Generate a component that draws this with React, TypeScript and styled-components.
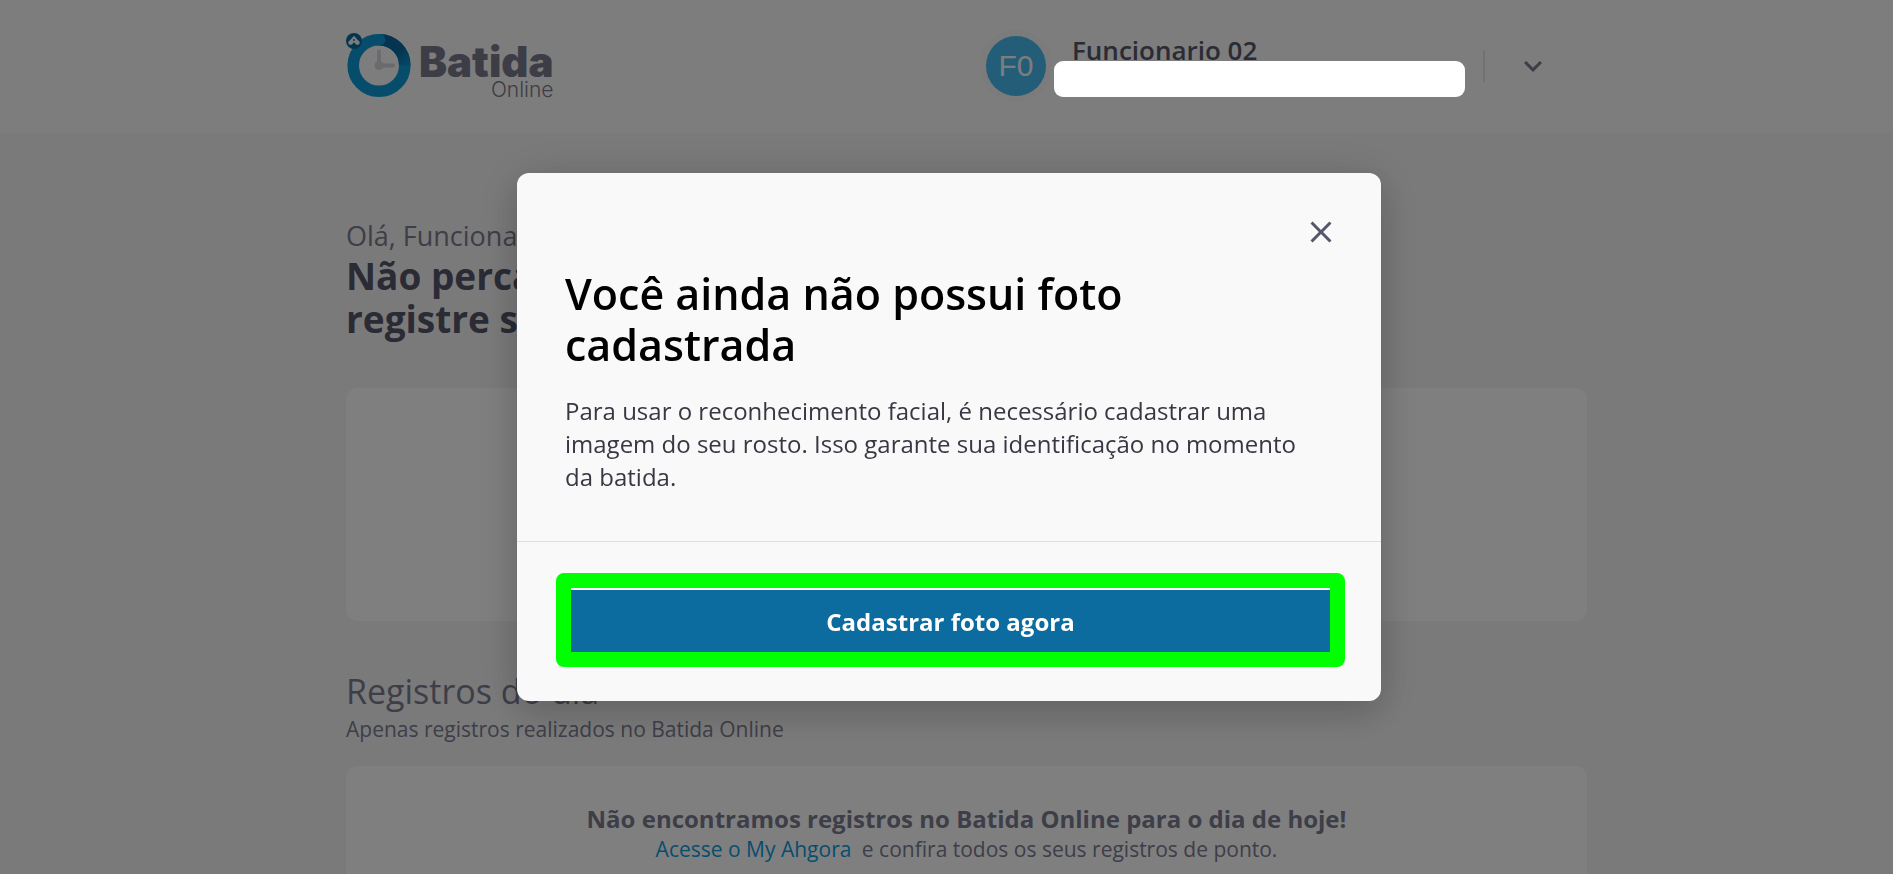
import React from 'react';
import styled, { createGlobalStyle } from 'styled-components';

const GlobalStyle = createGlobalStyle`
  *, *::before, *::after { box-sizing: border-box; }
  body { margin: 0; background: #f5f5f5; }
  h1, h2, p { margin: 0; }
  button { font: inherit; border: 0; cursor: pointer; }
`;

const Page = styled.div`
  height: 100vh;
  overflow: hidden;
  background: #f5f5f5;
  color: #7c7c92;
  font-family: 'Open Sans', 'Noto Sans', sans-serif;
`;

const TopBar = styled.header`
  display: flex;
  align-items: center;
  justify-content: space-between;
  min-height: 133px;
  padding: 0 348px 1px 346px;
  background: #fafafa;
`;

const Brand = styled.a`
  display: flex;
  align-items: flex-end;
  gap: 7px;
  color: #7a7a8e;
  text-decoration: none;
`;

const BrandName = styled.span`
  display: flex;
  flex-direction: column;
  align-items: flex-end;
  font-family: Inter, sans-serif;
`;

const BrandMain = styled.span`
  font-size: 42px;
  font-weight: 900;
  line-height: 36px;
`;

const BrandSub = styled.span`
  font-size: 21px;
  font-weight: 300;
  line-height: 20px;
`;

const Account = styled.div`
  display: flex;
  align-items: center;
`;

const Avatar = styled.div`
  display: grid;
  place-items: center;
  width: 60px;
  height: 60px;
  border-radius: 50%;
  background: #46baf0;
  box-shadow: 0 0 0 6px #f7f7f7;
  color: #fafafa;
  font: 30px/30px 'Liberation Sans', Arial, sans-serif;
`;

const Identity = styled.div`
  position: relative;
  width: 411px;
  height: 68px;
  margin-left: 26px;
`;

const UserName = styled.p`
  color: #56566a;
  font-size: 26px;
  font-weight: 600;
  line-height: 36px;
`;

const HiddenDetail = styled.div`
  position: absolute;
  z-index: 2;
  top: 29px;
  left: -18px;
  width: 411px;
  height: 36px;
  border-radius: 9px;
  background: #fff;
`;

const Divider = styled.span`
  width: 2px;
  height: 32px;
  margin-right: 36px;
  background: #e4e4e4;
`;

const IconButton = styled.button<{ $color: string }>`
  display: block;
  width: 24px;
  height: 24px;
  padding: 0;
  background: transparent;
  color: ${({ $color }) => $color};
  svg { display: block; }
`;

const Content = styled.main`
  padding: 85px 306px 48px 346px;
`;

const Greeting = styled.p`
  font-size: 27px;
  line-height: 36px;
`;

const Headline = styled.h1`
  max-width: 640px;
  color: #56566a;
  font-size: 37px;
  font-weight: 700;
  line-height: 43px;
`;

const Card = styled.section<{ $gap: number; $minHeight: number }>`
  min-height: ${({ $minHeight }) => $minHeight}px;
  margin-top: ${({ $gap }) => $gap}px;
  padding: 36px;
  border-radius: 12px;
  background: #fff;
  text-align: center;
`;

const SectionTitle = styled.h2`
  margin-top: 48px;
  font-size: 34px;
  font-weight: 400;
  line-height: 45px;
`;

const SectionHint = styled.p`
  font-size: 21px;
  line-height: 30px;
`;

const EmptyTitle = styled.p`
  font-size: 24px;
  font-weight: 700;
  line-height: 33px;
`;

const EmptyText = styled.p`
  font-size: 21px;
  line-height: 28px;
`;

const TextLink = styled.a`
  margin-right: 5px;
  color: #0d9ddb;
  text-decoration: none;
`;

const Overlay = styled.div`
  position: fixed;
  z-index: 1;
  inset: 0;
  display: flex;
  align-items: center;
  justify-content: center;
  padding-left: 5px;
  background: rgba(0, 0, 0, 0.5);
  font-family: 'Open Sans', 'Noto Sans', sans-serif;
`;

const Dialog = styled.div`
  width: 864px;
  max-width: 100%;
  border-radius: 12px;
  background: #f9f9f9;
  box-shadow:
    0 12px 36px rgba(0, 0, 0, 0.14),
    0 4px 46px 4px rgba(0, 0, 0, 0.1);
`;

const DialogBody = styled.div`
  display: flex;
  flex-direction: column;
  gap: 24px;
  padding: 47px 48px 48px;
  border-bottom: 1px solid #dedee0;
`;

const DialogTop = styled.div`
  display: flex;
  justify-content: flex-end;
`;

const DialogTitle = styled.h2`
  max-width: 640px;
  color: #000;
  font-size: 43px;
  font-weight: 600;
  line-height: 51px;
`;

const DialogText = styled.p`
  max-width: 756px;
  color: #383844;
  font-size: 24px;
  line-height: 33px;
`;

const DialogActions = styled.div`
  padding: 31px 36px 34px 39px;
`;

const Highlight = styled.div`
  padding-top: 2px;
  border: 15px solid #00ff00;
  border-radius: 8px;
`;

const PrimaryButton = styled.button`
  display: block;
  width: 100%;
  height: 62px;
  padding: 0;
  background: #0c6c9f;
  color: #fff;
  && { font-size: 24px; font-weight: 700; }
`;

const LogoMark = () => (
  <svg width="66" height="67" viewBox="346 33 66 67" aria-hidden="true">
    <defs>
      <linearGradient id="sweep" x1="385" y1="40" x2="408" y2="72" gradientUnits="userSpaceOnUse">
        <stop offset="0" stopColor="#09689e" />
        <stop offset="0.4" stopColor="#09689e" />
        <stop offset="1" stopColor="#0c9bd8" />
      </linearGradient>
    </defs>
    <circle cx="379" cy="65.500" r="25.800" fill="none" stroke="#0c9bd8" strokeWidth="11.600" />
    <path d="M380 39.700a25.800 25.800 0 0 1 24.800 25.800" fill="none" stroke="url(#sweep)" strokeWidth="11.600" />
    <path d="M378 39.700h1.500" fill="none" stroke="#0c9bd8" strokeWidth="11.600" strokeLinecap="round" />
    <path d="M379 51.500V65.500H393" fill="none" stroke="#d4d4de" strokeWidth="4" strokeLinecap="round" />
    <circle cx="379" cy="65.500" r="4.500" fill="#d4d4de" />
    <circle cx="354" cy="41" r="8" fill="#0b6c9e" />
    <path
      d="M354 35.800 358.200 40.400a2.300 2.300 0 1 1-2.600 3.600L354 42.200 352.400 44a2.300 2.300 0 1 1-2.600-3.600z"
      fill="#f4fafc"
    />
    <circle cx="354" cy="40" r="0.900" fill="#0b6c9e" />
  </svg>
);

const ChevronIcon = () => (
  <svg width="24" height="24" viewBox="4 4 16 16" fill="currentColor" aria-hidden="true">
    <path d="M7.410 8.590 12 13.170l4.590-4.580L18 10l-6 6-6-6z" />
  </svg>
);

const CloseIcon = () => (
  <svg width="24" height="24" viewBox="4 4 16 16" fill="currentColor" aria-hidden="true">
    <path d="M19 6.410 17.590 5 12 10.590 6.410 5 5 6.410 10.590 12 5 17.590 6.410 19 12 13.410 17.590 19 19 17.590 13.410 12z" />
  </svg>
);

export default function App() {
  return (
    <>
      <GlobalStyle />
      <Page>
        <TopBar>
          <Brand href="#">
            <LogoMark />
            <BrandName>
              <BrandMain>Batida</BrandMain>
              <BrandSub>Online</BrandSub>
            </BrandName>
          </Brand>
          <Account>
            <Avatar>F0</Avatar>
            <Identity>
              <UserName>Funcionario 02</UserName>
              <HiddenDetail />
            </Identity>
            <Divider />
            <IconButton type="button" $color="#7a7a8e" aria-label="Abrir menu">
              <ChevronIcon />
            </IconButton>
          </Account>
        </TopBar>
        <Content>
          <Greeting>Olá, Funcionario 02</Greeting>
          <Headline>
            Não perca tempo,
            <br />
            registre sua batida
          </Headline>
          <Card $gap={48} $minHeight={233} />
          <SectionTitle>Registros do dia</SectionTitle>
          <SectionHint>Apenas registros realizados no Batida Online</SectionHint>
          <Card $gap={22} $minHeight={180}>
            <EmptyTitle>Não encontramos registros no Batida Online para o dia de hoje!</EmptyTitle>
            <EmptyText>
              <TextLink href="#">Acesse o My Ahgora</TextLink> e confira todos os seus registros de ponto.
            </EmptyText>
          </Card>
        </Content>
      </Page>
      <Overlay>
        <Dialog role="dialog" aria-modal="true" aria-labelledby="dialog-title">
          <DialogBody>
            <DialogTop>
              <IconButton type="button" $color="#56566a" aria-label="Fechar">
                <CloseIcon />
              </IconButton>
            </DialogTop>
            <DialogTitle id="dialog-title">Você ainda não possui foto cadastrada</DialogTitle>
            <DialogText>
              Para usar o reconhecimento facial, é necessário cadastrar uma imagem do seu rosto. Isso garante sua
              identificação no momento da batida.
            </DialogText>
          </DialogBody>
          <DialogActions>
            <Highlight>
              <PrimaryButton type="button">Cadastrar foto agora</PrimaryButton>
            </Highlight>
          </DialogActions>
        </Dialog>
      </Overlay>
    </>
  );
}
